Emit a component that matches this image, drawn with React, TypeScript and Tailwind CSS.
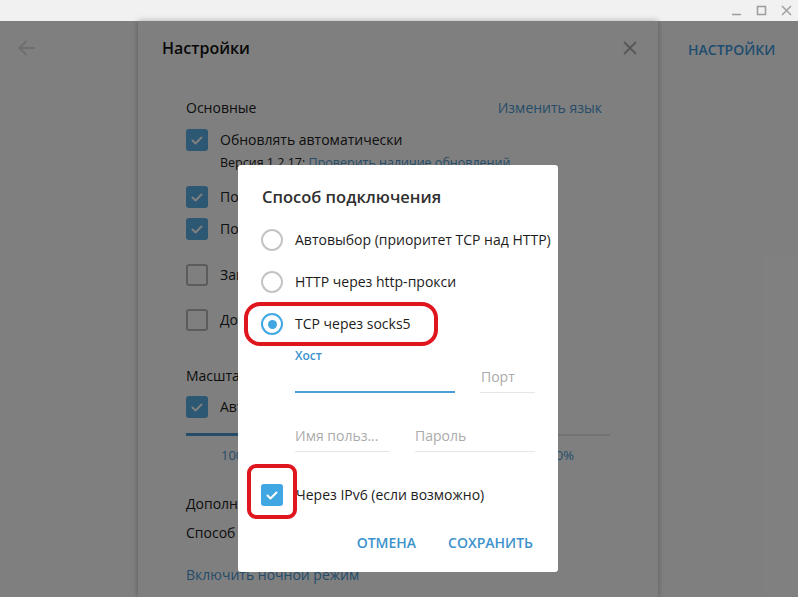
import React from "react";

const Check = () => (
  <svg width="22" height="22" viewBox="0 0 22 22" fill="none">
    <path d="M6.5 11.5 L9.5 14.5 L15.5 8.5" stroke="white" strokeWidth="2" strokeLinecap="round" strokeLinejoin="round" />
  </svg>
);

function SCheck({ checked, label }: { checked: boolean; label: string }) {
  return (
    <div className="flex items-center h-[22px]">
      {checked ? (
        <div className="w-[22px] h-[22px] rounded-[3px] bg-[#58b0e6] flex items-center justify-center">
          <Check />
        </div>
      ) : (
        <div className="w-[22px] h-[22px] rounded-[3px] border-2 border-[#b8b8b8]" />
      )}
      <span className="ml-[12px] text-[14px] leading-[20px] text-[#202020] whitespace-nowrap">{label}</span>
    </div>
  );
}

function Radio({ checked, label }: { checked: boolean; label: string }) {
  return (
    <div className="flex items-center h-[22px]">
      {checked ? (
        <div className="w-[22px] h-[22px] rounded-full border-2 border-[#40a7e3] flex items-center justify-center">
          <div className="w-[9px] h-[9px] rounded-full bg-[#40a7e3]" />
        </div>
      ) : (
        <div className="w-[22px] h-[22px] rounded-full border-2 border-[#c4c4c4]" />
      )}
      <span className="ml-[12px] text-[14px] leading-[20px] text-[#1c1c1c] whitespace-nowrap">{label}</span>
    </div>
  );
}

export default function App() {
  return (
    <div className="relative w-[798px] h-[597px] overflow-hidden bg-white font-['Open_Sans',sans-serif]">
      {/* title bar */}
      <div className="h-[21px] bg-[#f1f1f1] flex justify-end items-center pr-[6px] gap-[14px]">
        <svg width="11" height="11" viewBox="0 0 11 11">
          <line x1="1" y1="9.5" x2="10" y2="9.5" stroke="#a0a0a0" strokeWidth="1.6" />
        </svg>
        <svg width="11" height="11" viewBox="0 0 11 11">
          <rect x="1.5" y="1.5" width="8" height="8" stroke="#a0a0a0" strokeWidth="1.6" fill="none" />
        </svg>
        <svg width="11" height="11" viewBox="0 0 11 11">
          <path d="M1 1 L10 10 M10 1 L1 10" stroke="#a0a0a0" strokeWidth="1.5" />
        </svg>
      </div>

      <div className="flex h-[576px]">
        {/* left column */}
        <div className="w-[138px] shrink-0 pt-[17px] pl-[17px]">
          <svg width="20" height="20" viewBox="0 0 20 20" fill="none">
            <path d="M18 10 H2.5 M9.5 3 L2.5 10 L9.5 17" stroke="#dcdcdc" strokeWidth="2" />
          </svg>
        </div>

        {/* settings panel */}
        <div className="w-[520px] shrink-0 bg-white shadow-[0_0_6px_rgba(0,0,0,0.3)] relative z-10">
          <div className="h-[54px] flex items-center justify-between pl-[24px] pr-[20px]">
            <span className="text-[16px] font-semibold text-[#111]">Настройки</span>
            <svg width="16" height="16" viewBox="0 0 16 16">
              <path d="M2 2 L14 14 M14 2 L2 14" stroke="#b0b0b0" strokeWidth="2" />
            </svg>
          </div>
          <div className="pl-[48px] pr-[56px]">
            <div className="mt-[23px] flex justify-between text-[14px] leading-[20px]">
              <span className="text-[#202020]">Основные</span>
              <span className="text-[#4a98d2]">Изменить язык</span>
            </div>
            <div className="mt-[11px]">
              <SCheck checked label="Обновлять автоматически" />
            </div>
            <div className="mt-[3px] pl-[34px] text-[12.5px] leading-[18px] text-[#202020] whitespace-nowrap">
              Версия 1.2.17: <span className="text-[#4a98d2]">Проверить наличие обновлений</span>
            </div>
            <div className="mt-[14px]">
              <SCheck checked label="Показывать иконку в трее" />
            </div>
            <div className="mt-[10px]">
              <SCheck checked label="Показывать иконку в панели задач" />
            </div>
            <div className="mt-[24px]">
              <SCheck checked={false} label="Запускать Telegram при запуске системы" />
            </div>
            <div className="mt-[23px]">
              <SCheck checked={false} label="Добавить в меню «Отправить»" />
            </div>
            <div className="mt-[35px] text-[14px] leading-[20px] text-[#202020]">Масштаб интерфейса</div>
            <div className="mt-[10px]">
              <SCheck checked label="Автоматически (по умолчанию)" />
            </div>
            <div className="mt-[15px] -mr-[8px] h-[3px] flex items-center">
              <div className="w-[120px] h-[3px] bg-[#4a98d2]" />
              <div className="flex-1 h-[2px] bg-[#e4e4e4]" />
            </div>
            <div className="mt-[10px] pl-[35px] pr-[28px] flex justify-between text-[13px] leading-[18px] text-[#4a98d2]">
              <span>100%</span>
              <span>125%</span>
              <span>150%</span>
              <span>200%</span>
              <span>250%</span>
              <span>300%</span>
            </div>
            <div className="mt-[30px] text-[14px] leading-[20px] text-[#202020]">Дополнительные</div>
            <div className="mt-[9px] text-[14px] leading-[20px] text-[#202020] whitespace-nowrap">
              Способ подключения: <span className="text-[#4a98d2]">TCP через socks5</span>
            </div>
            <div className="mt-[22px] text-[14px] leading-[20px] text-[#4a98d2]">Включить ночной режим</div>
          </div>
        </div>

        {/* right column */}
        <div className="flex-1 pt-[16px] pl-[30px]">
          <span className="text-[14px] leading-[22px] font-semibold text-[#3d9ae0]">НАСТРОЙКИ</span>
        </div>
      </div>

      {/* dim overlay */}
      <div className="absolute left-0 right-0 top-[21px] bottom-0 bg-black/50 z-20" />

      {/* dialog */}
      <div className="absolute left-[238px] top-[165px] w-[320px] h-[407px] bg-white rounded-[3px] z-30 flex flex-col">
        <div className="pl-[24px] pt-[21px] text-[16.5px] leading-[22px] font-semibold text-[#303030]">
          Способ подключения
        </div>
        <div className="pl-[23px] mt-[21px] flex flex-col gap-[20px]">
          <Radio checked={false} label="Автовыбор (приоритет TCP над HTTP)" />
          <Radio checked={false} label="HTTP через http-прокси" />
          <Radio checked label="TCP через socks5" />
        </div>
        <div className="pl-[57px] pr-[23px]">
          <div className="mt-[13px] text-[12px] leading-[16px] font-semibold text-[#3d92cc]">Хост</div>
          <div className="flex items-end gap-[25px] mt-[3px]">
            <div className="w-[160px] h-[22px] border-b-2 border-[#4a9fd4]" />
            <div className="flex-1 h-[26px] border-b border-[#e6e6e6] text-[14px] leading-[20px] text-[#ababab] pl-[1px]">
              Порт
            </div>
          </div>
          <div className="flex items-end gap-[25px] mt-[33px]">
            <div className="w-[95px] h-[26px] border-b border-[#e6e6e6] text-[14px] leading-[20px] text-[#ababab] whitespace-nowrap">
              Имя польз...
            </div>
            <div className="flex-1 h-[26px] border-b border-[#e6e6e6] text-[14px] leading-[20px] text-[#ababab]">
              Пароль
            </div>
          </div>
        </div>
        <div className="pl-[23px] mt-[32px] flex items-center h-[22px]">
          <div className="w-[22px] h-[22px] rounded-[3px] bg-[#40a7e3] flex items-center justify-center">
            <Check />
          </div>
          <span className="ml-[13px] text-[14px] leading-[20px] text-[#1c1c1c]">Через IPv6 (если возможно)</span>
        </div>
        <div className="mt-[27px] pr-[25px] flex justify-end gap-[32px] text-[14px] leading-[20px] font-semibold text-[#3d92cc]">
          <span>ОТМЕНА</span>
          <span>СОХРАНИТЬ</span>
        </div>
      </div>

      {/* red annotation marks */}
      <div className="absolute left-[244px] top-[302px] w-[194px] h-[44px] border-[4px] border-[#e0161e] rounded-[16px] z-40" />
      <div className="absolute left-[247px] top-[464px] w-[50px] h-[55px] border-[4px] border-[#e0161e] rounded-[9px] z-40" />
    </div>
  );
}
